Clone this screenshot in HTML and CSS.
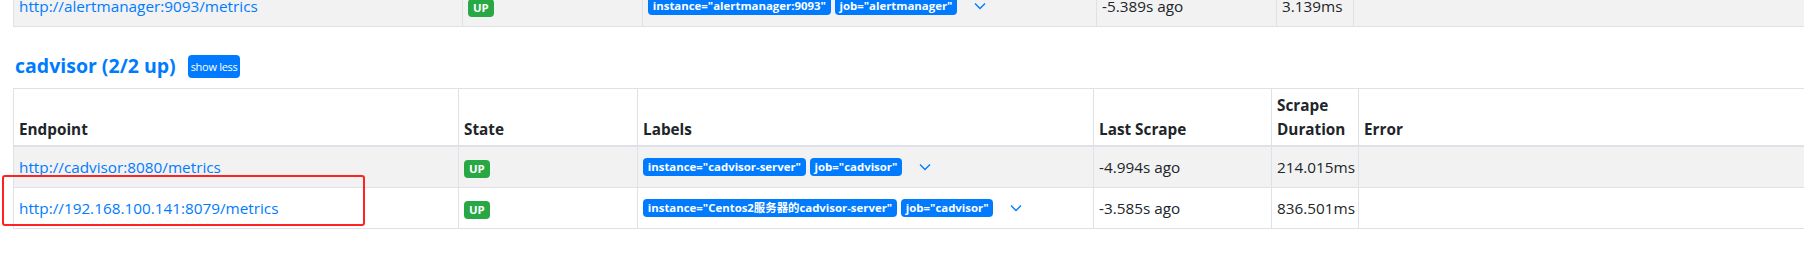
FILE: index.html
```html
<!DOCTYPE html>
<html lang="en">
<head>
  <meta charset="UTF-8">
  <meta name="viewport" content="width=device-width, initial-scale=1.0">
  <title>Prometheus - Targets</title>
  <link rel="stylesheet" href="styles.css">
</head>
<body>
  <div class="page">
    <table class="targets prev">
      <colgroup>
        <col class="c-endpoint-prev">
        <col class="c-state-prev">
        <col class="c-labels-prev">
        <col class="c-last-prev">
        <col class="c-dur-prev">
        <col>
      </colgroup>
      <tbody>
        <tr class="striped">
          <td><a href="#">http://alertmanager:9093/metrics</a></td>
          <td><span class="badge up">UP</span></td>
          <td>
            <div class="label-list">
              <span class="badge label">instance="alertmanager:9093"</span>
              <span class="badge label">job="alertmanager"</span>
              <button class="expand"><svg width="12" height="8" viewBox="0 0 12 8"><polyline points="1,1.5 6,6.5 11,1.5"/></svg></button>
            </div>
          </td>
          <td>-5.389s ago</td>
          <td>3.139ms</td>
          <td></td>
        </tr>
      </tbody>
    </table>

    <div class="pool-head">
      <a href="#" class="pool-name">cadvisor (2/2 up)</a>
      <button class="btn-toggle">show less</button>
    </div>

    <table class="targets">
      <colgroup>
        <col class="c-endpoint">
        <col class="c-state">
        <col class="c-labels">
        <col class="c-last">
        <col class="c-dur">
        <col>
      </colgroup>
      <thead>
        <tr>
          <th>Endpoint</th>
          <th>State</th>
          <th>Labels</th>
          <th>Last Scrape</th>
          <th>Scrape Duration</th>
          <th>Error</th>
        </tr>
      </thead>
      <tbody>
        <tr class="striped">
          <td><a href="#">http://cadvisor:8080/metrics</a></td>
          <td><span class="badge up">UP</span></td>
          <td>
            <div class="label-list">
              <span class="badge label">instance="cadvisor-server"</span>
              <span class="badge label">job="cadvisor"</span>
              <button class="expand"><svg width="12" height="8" viewBox="0 0 12 8"><polyline points="1,1.5 6,6.5 11,1.5"/></svg></button>
            </div>
          </td>
          <td>-4.994s ago</td>
          <td>214.015ms</td>
          <td></td>
        </tr>
        <tr>
          <td><a href="#">http://192.168.100.141:8079/metrics</a></td>
          <td><span class="badge up">UP</span></td>
          <td>
            <div class="label-list">
              <span class="badge label">instance="Centos2服务器的cadvisor-server"</span>
              <span class="badge label">job="cadvisor"</span>
              <button class="expand"><svg width="12" height="8" viewBox="0 0 12 8"><polyline points="1,1.5 6,6.5 11,1.5"/></svg></button>
            </div>
          </td>
          <td>-3.585s ago</td>
          <td>836.501ms</td>
          <td></td>
        </tr>
      </tbody>
    </table>

    <!-- red highlight drawn over the screenshot -->
    <div class="mark"></div>
  </div>
</body>
</html>
```

FILE: styles.css
```css
body {
  font-family: "Open Sans", "Noto Sans CJK SC", sans-serif;
  font-size: 15.3px;
  line-height: 24px;
  color: #212529;
  margin: 0;
  padding: 0;
  overflow: hidden;
}

.page {
  position: relative;
  width: 1804px;
  height: 255px;
  overflow: hidden;
}

a {
  color: #007bff;
  text-decoration: none;
}

.targets {
  border-collapse: collapse;
  table-layout: fixed;
  width: 2000px;
  margin-left: 13px;
}

.targets th,
.targets td {
  border: 1px solid #dee2e6;
  padding: 5px;
  vertical-align: middle;
  text-align: left;
  white-space: nowrap;
}

.targets th {
  font-weight: 700;
  vertical-align: bottom;
  white-space: normal;
  padding: 4px 5px;
  border-bottom: 2px solid #dee2e6;
}

.targets tr.striped td {
  background-color: #f2f2f2;
}

.targets.prev {
  margin-top: -15px;
}

.c-endpoint-prev { width: 449px; }
.c-state-prev { width: 180px; }
.c-labels-prev { width: 454px; }
.c-last-prev { width: 180px; }
.c-dur-prev { width: 77px; }

.c-endpoint { width: 445px; }
.c-state { width: 179px; }
.c-labels { width: 456px; }
.c-last { width: 178px; }
.c-dur { width: 87px; }

.badge {
  display: inline-block;
  font-size: 11.4px;
  font-weight: 700;
  line-height: 1;
  color: #fff;
  padding: 3px 4.8px;
  border-radius: 4px;
  vertical-align: middle;
}

.badge.up {
  background-color: #28a745;
  padding: 3px 5px;
}

.badge.label {
  background-color: #007bff;
  margin-right: 4px;
}

.label-list {
  display: flex;
  align-items: center;
  height: 30px;
}

.expand {
  background: none;
  border: none;
  padding: 0;
  margin-left: 12px;
  height: 30px;
  width: 14px;
  display: flex;
  align-items: center;
  justify-content: center;
  cursor: pointer;
}

.expand svg polyline {
  fill: none;
  stroke: #007bff;
  stroke-width: 1.4;
}

.pool-head {
  display: flex;
  align-items: center;
  height: 30px;
  margin: 24px 0 7px 15px;
}

.pool-name {
  font-size: 19.5px;
  font-weight: 700;
  line-height: 30px;
}

.btn-toggle {
  margin-left: 12px;
  background-color: #007bff;
  color: #fff;
  border: none;
  border-radius: 4px;
  font-family: "Open Sans", sans-serif;
  font-size: 11px;
  letter-spacing: -0.3px;
  height: 23px;
  padding: 0 3px;
  cursor: pointer;
}

.mark {
  position: absolute;
  left: 2px;
  top: 175px;
  width: 359px;
  height: 47px;
  border: 2px solid #f22;
  border-radius: 3px;
}
```
